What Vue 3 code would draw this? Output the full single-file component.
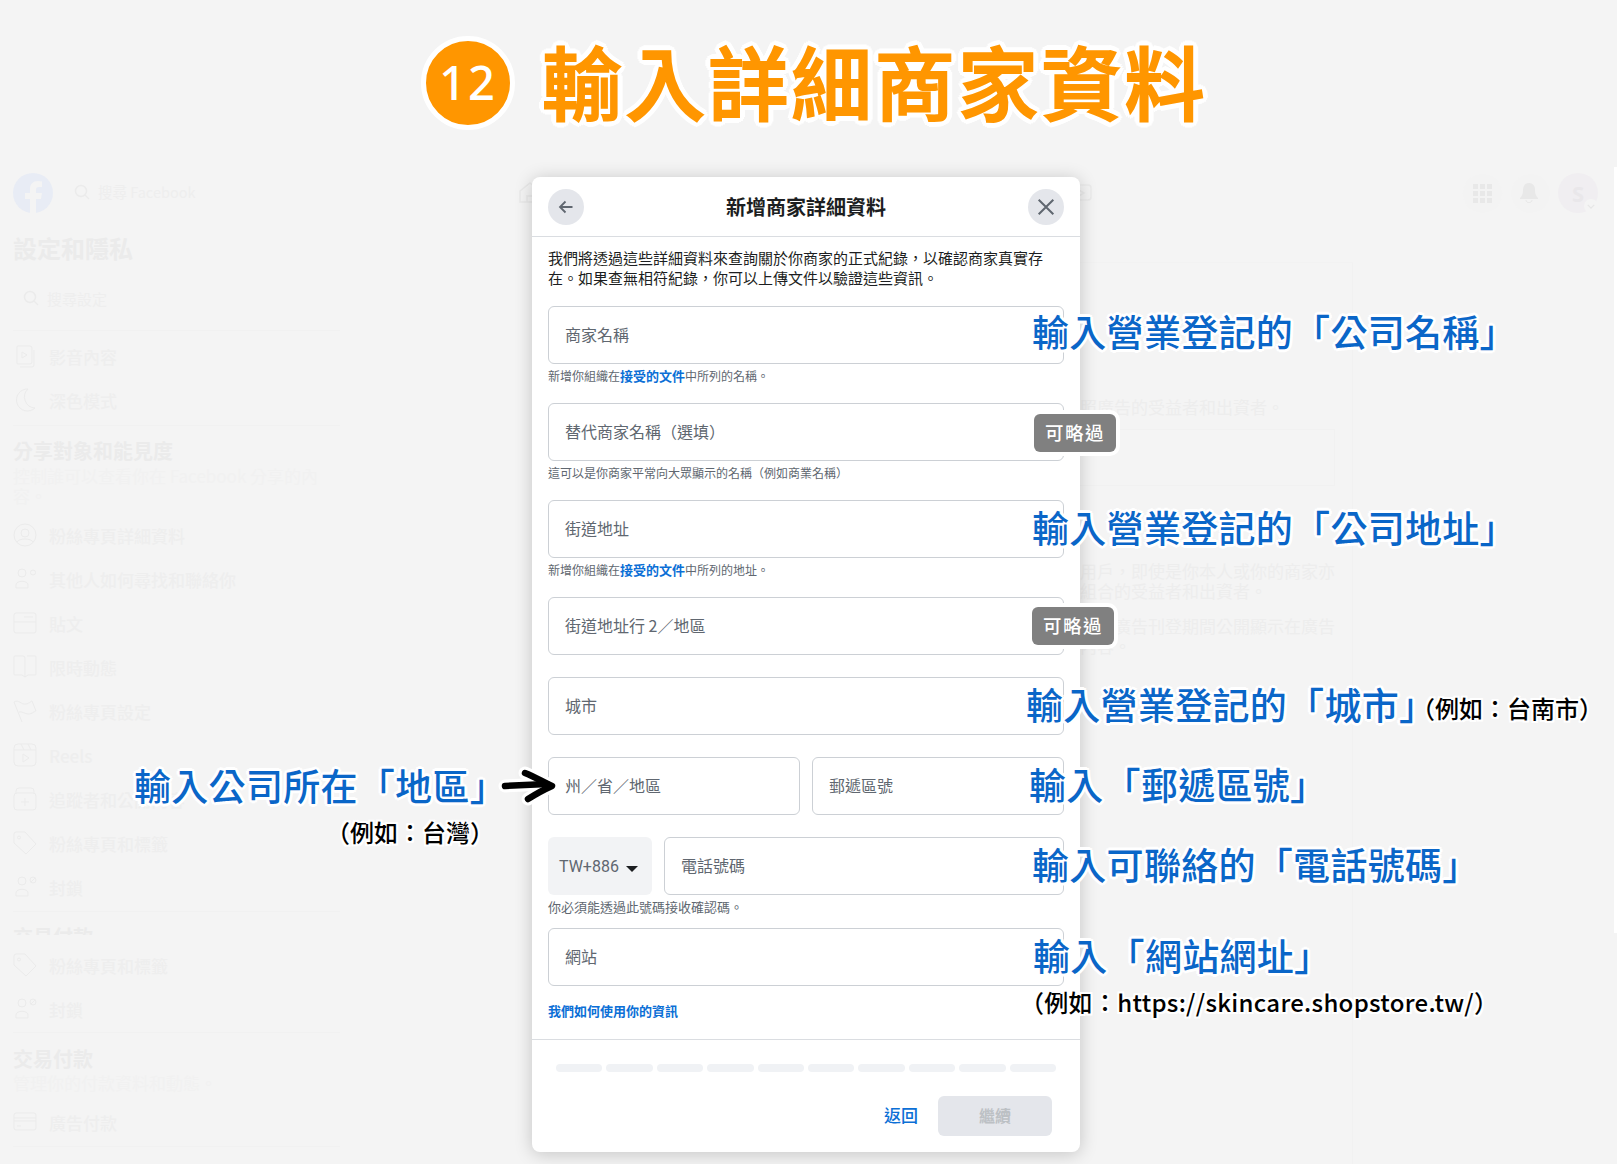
<template>
  <div class="canvas">
    <!-- faded facebook settings page behind the dialog -->
    <div class="backdrop">
      <div class="strip"></div>
      <div class="topbar">
        <svg class="fb" viewBox="0 0 40 40">
          <circle cx="20" cy="20" r="20" fill="#e8ecf5" />
          <path d="M17 40V26h-5v-6h5v-4c0-5 3-8 8-8l4 .4V14h-3c-2.400 0-3 1.300-3 3v3h6l-1 6h-5v14z" fill="#f4f4f4" />
        </svg>
        <svg class="ico-search" viewBox="0 0 16 16"><circle cx="7" cy="7" r="5.500" /><path d="M11 11l4 4" /></svg>
        <span class="bar-search">搜尋 Facebook</span>
        <svg class="bar-home" viewBox="0 0 22 22"><path d="M1 20V9l10-8 10 8v11z" /><path d="M8 20v-6h6v6" /></svg>
        <svg class="bar-tv" viewBox="0 0 22 18"><rect x="1" y="1" width="20" height="15" rx="3" /><path d="M9 6l5 3-5 3z" /></svg>
        <div class="bar-btn first">
          <span v-for="n in 9" :key="n" class="cell"></span>
        </div>
        <div class="bar-btn">
          <svg class="bell" viewBox="0 0 18 20"><path d="M9 0c4 0 6 3 6 7 0 4 1 6 3 8v1H0v-1c2-2 3-4 3-8 0-4 2-7 6-7z" /><path d="M6 17c0 3.500 6 3.500 6 0" class="bell-clap" /></svg>
        </div>
        <div class="avatar">
          S
          <span class="avatar-chev"><svg viewBox="0 0 10 6"><path d="M1 1l4 4 4-4" /></svg></span>
        </div>
      </div>

      <aside class="sidebar">
        <h2 class="side-title">設定和隱私</h2>
        <div class="side-search">
          <svg class="ico-search" viewBox="0 0 16 16"><circle cx="7" cy="7" r="5.500" /><path d="M11 11l4 4" /></svg>
          <span>搜尋設定</span>
        </div>
        <hr class="side-line" />
        <ul class="rows first-rows">
          <li v-for="row in groupA" :key="row.text">
            <svg viewBox="0 0 24 24"><path :d="icons[row.icon]" /></svg>{{ row.text }}
          </li>
        </ul>
        <hr class="side-line after-first" />
        <h3 class="side-head">分享對象和能見度</h3>
        <p class="side-sub">控制誰可以查看你在 Facebook 分享的內<br />容。</p>
        <ul class="rows">
          <li v-for="row in groupB" :key="row.text">
            <svg viewBox="0 0 24 24"><path :d="icons[row.icon]" /></svg>{{ row.text }}
          </li>
        </ul>
        <hr class="side-line after-b" />
        <div class="clip-head"><h3 class="side-head">交易付款</h3></div>
        <ul class="rows rows-c">
          <li v-for="row in groupC" :key="row.text">
            <svg viewBox="0 0 24 24"><path :d="icons[row.icon]" /></svg>{{ row.text }}
          </li>
        </ul>
        <hr class="side-line after-c" />
        <h3 class="side-head second">交易付款</h3>
        <p class="side-sub tight">管理你的付款資料和動態。</p>
        <ul class="rows">
          <li>
            <svg viewBox="0 0 24 24"><path :d="icons.card" /></svg>廣告付款
          </li>
        </ul>
        <hr class="side-line last" />
      </aside>

      <section class="panel">
        <p class="panel-text">照廣告的受益者和出資者。</p>
        <div class="panel-box"></div>
        <p class="panel-text gap-a">用戶，即使是你本人或你的商家亦<br />組合的受益者和出資者。</p>
        <p class="panel-text gap-b">會在廣告刊登期間公開顯示在廣告<br />內容。</p>
      </section>
    </div>

    <header class="heading">
      <span class="step">12</span>
      <h1 class="heading-text">輸入詳細商家資料</h1>
    </header>

    <main class="modal">
      <div class="modal-head">
        <button class="round">
          <svg viewBox="0 0 16 16" width="16" height="16"><path d="M14.500 8H2M7.500 2.500L2 8l5.500 5.500" /></svg>
        </button>
        <h2 class="modal-title">新增商家詳細資料</h2>
        <button class="round">
          <svg viewBox="0 0 16 16" width="18" height="18"><path d="M1.500 1.500l13 13M14.500 1.500l-13 13" /></svg>
        </button>
      </div>

      <div class="modal-body">
        <p class="intro">我們將透過這些詳細資料來查詢關於你商家的正式紀錄，以確認商家真實存在。如果查無相符紀錄，你可以上傳文件以驗證這些資訊。</p>

        <div class="field has-help">
          <div class="input">商家名稱</div>
          <p class="help">新增你組織在<a>接受的文件</a>中所列的名稱。</p>
        </div>
        <div class="field has-help">
          <div class="input">替代商家名稱（選填）</div>
          <p class="help">這可以是你商家平常向大眾顯示的名稱（例如商業名稱）</p>
        </div>
        <div class="field has-help">
          <div class="input">街道地址</div>
          <p class="help">新增你組織在<a>接受的文件</a>中所列的地址。</p>
        </div>
        <div class="field">
          <div class="input">街道地址行 2／地區</div>
        </div>
        <div class="field">
          <div class="input">城市</div>
        </div>
        <div class="field split">
          <div class="input">州／省／地區</div>
          <div class="input">郵遞區號</div>
        </div>
        <div class="field phone">
          <div class="phone-row">
            <div class="select">TW+886<span class="caret"></span></div>
            <div class="input">電話號碼</div>
          </div>
          <p class="help big">你必須能透過此號碼接收確認碼。</p>
        </div>
        <div class="field site">
          <div class="input">網站</div>
        </div>
        <a class="how">我們如何使用你的資訊</a>
      </div>

      <div class="modal-foot">
        <div class="progress">
          <span v-for="n in 10" :key="n"></span>
        </div>
        <div class="actions">
          <a class="back">返回</a>
          <button class="next">繼續</button>
        </div>
      </div>
    </main>

    <!-- annotations laid over the dialog -->
    <div class="note n-name">輸入營業登記的「公司名稱」</div>
    <div class="skip s-one">可略過</div>
    <div class="note n-addr">輸入營業登記的「公司地址」</div>
    <div class="skip s-two">可略過</div>
    <div class="note n-city">輸入營業登記的「城市」</div>
    <div class="hint h-city">（例如：台南市）</div>
    <div class="note n-zip">輸入「郵遞區號」</div>
    <div class="note n-phone">輸入可聯絡的「電話號碼」</div>
    <div class="note n-site">輸入「網站網址」</div>
    <div class="hint h-site">（例如：https://skincare.shopstore.tw/）</div>
    <div class="note n-area">輸入公司所在「地區」</div>
    <div class="hint h-area">（例如：台灣）</div>
    <svg class="arrow" viewBox="0 0 70 44">
      <g class="arrow-halo">
        <path d="M10 22L52 20" />
        <path d="M30 9C40 13 48 18 57 22C48 26 41 30 33 35" />
      </g>
      <g class="arrow-ink">
        <path d="M10 22L52 20" />
        <path d="M30 9C40 13 48 18 57 22C48 26 41 30 33 35" />
      </g>
    </svg>
  </div>
</template>

<script setup>
const icons = {
  video: 'M5 2h12a2 2 0 0 1 2 2v14a2 2 0 0 1-2 2H5a1 1 0 0 1-1-1V3a1 1 0 0 1 1-1zM9 8l5 3-5 3zM21 6v15a2 2 0 0 1-2 2H7',
  moon: 'M15 1a11 11 0 1 0 7 19A11 11 0 0 1 15 1z',
  user: 'M12 1a11 11 0 1 0 0 22 11 11 0 0 0 0-22zM12 6a4 4 0 1 0 0 8 4 4 0 0 0 0-8zM4 19c2-4 14-4 16 0',
  people: 'M9 2a4 4 0 1 0 0 8 4 4 0 0 0 0-8zM3 21v-3c0-5 12-5 12 0v3zM20 3a2.500 2.500 0 1 0 0 5 2.500 2.500 0 0 0 0-5z',
  post: 'M3 2h18a2 2 0 0 1 2 2v16a2 2 0 0 1-2 2H3a2 2 0 0 1-2-2V4a2 2 0 0 1 2-2zM1 11h22M6 6h0M11 6h9',
  story: 'M2 1h8a2 2 0 0 1 2 2v19l-3-2H2a1 1 0 0 1-1-1V2a1 1 0 0 1 1-1zM14 1h8a1 1 0 0 1 1 1v17a1 1 0 0 1-1 1h-7l-3 2',
  flag: 'M9 23L1 3c5-3 7 3 12 2 4-1 5-3 6-3l4 10c-2 0-3 3-8 3-3 0-6-3-9-2',
  reels: 'M5 1h14a4 4 0 0 1 4 4v14a4 4 0 0 1-4 4H5a4 4 0 0 1-4-4V5a4 4 0 0 1 4-4zM1 7h22M8 1l3 6M15 1l3 6M10 11l6 4-6 4z',
  plus: 'M4 6h16a3 3 0 0 1 3 3v11a3 3 0 0 1-3 3H4a3 3 0 0 1-3-3V9a3 3 0 0 1 3-3zM3 6V4a3 3 0 0 1 3-3h12a3 3 0 0 1 3 3v2M12 11v8M8 15h8',
  tag: 'M3 1h9l11 12-10 10L1 12V3a2 2 0 0 1 2-2zM6 5a1.500 1.500 0 1 0 0 3 1.500 1.500 0 0 0 0-3z',
  block: 'M9 2a4 4 0 1 0 0 8 4 4 0 0 0 0-8zM3 21v-3c0-5 12-5 12 0v3zM20 2a3 3 0 1 0 0 6 3 3 0 0 0 0-6zM18 7l4-4',
  card: 'M3 3h18a2 2 0 0 1 2 2v13a2 2 0 0 1-2 2H3a2 2 0 0 1-2-2V5a2 2 0 0 1 2-2zM1 8h22M1 11h22M4 16h4',
}

const groupA = [
  { icon: 'video', text: '影音內容' },
  { icon: 'moon', text: '深色模式' },
]

const groupB = [
  { icon: 'user', text: '粉絲專頁詳細資料' },
  { icon: 'people', text: '其他人如何尋找和聯絡你' },
  { icon: 'post', text: '貼文' },
  { icon: 'story', text: '限時動態' },
  { icon: 'flag', text: '粉絲專頁設定' },
  { icon: 'reels', text: 'Reels' },
  { icon: 'plus', text: '追蹤者和公開內容' },
  { icon: 'tag', text: '粉絲專頁和標籤' },
  { icon: 'block', text: '封鎖' },
]

const groupC = [
  { icon: 'tag', text: '粉絲專頁和標籤' },
  { icon: 'block', text: '封鎖' },
]
</script>

<style scoped>
.canvas {
  position: relative;
  width: 1617px;
  height: 1164px;
  overflow: hidden;
  background: #f4f4f4;
  font-family: "Noto Sans CJK TC", "Noto Sans", sans-serif;
}

/* backdrop */
.backdrop {
  position: absolute;
  inset: 0;
  padding-top: 173px;
  color: #ececec;
}

.strip {
  position: absolute;
  top: 167px;
  right: 0;
  width: 3px;
  height: 766px;
  background: #fff;
}

.topbar {
  display: flex;
  align-items: center;
  height: 40px;
  padding-left: 13px;
}

.fb {
  width: 40px;
  height: 40px;
}

.ico-search {
  width: 16px;
  height: 16px;
  flex: none;
  fill: none;
  stroke: #ebebeb;
  stroke-width: 1.500;
}

.topbar .ico-search {
  margin: 0 0 2px 21px;
}

.bar-search {
  width: 421px;
  margin: 0 0 3px 8px;
  font-size: 14.500px;
  color: #eeeeee;
}

.bar-home {
  width: 22px;
  height: 22px;
  fill: none;
  stroke: #e9e9e9;
  stroke-width: 1.500;
}

.bar-tv {
  width: 22px;
  height: 18px;
  margin-left: 529px;
  fill: none;
  stroke: #ebebeb;
  stroke-width: 1.500;
}

.bar-btn {
  display: grid;
  grid-template-columns: repeat(3, 5px);
  gap: 2px;
  place-content: center;
  width: 39px;
  height: 39px;
  margin-left: 9px;
  border-radius: 50%;
  background: #f3f3f3;
}

.bar-btn.first {
  margin-left: 371px;
}

.cell {
  width: 5px;
  height: 5px;
  background: #e8e8e8;
}

.bell {
  width: 18px;
  height: 20px;
  grid-column: 1 / 4;
  margin-left: -1px;
  fill: #e8e8e8;
}

.bell-clap {
  fill: none;
  stroke: #e8e8e8;
}

.avatar {
  position: relative;
  width: 40px;
  height: 40px;
  margin-left: 8px;
  border-radius: 50%;
  background: #f0eef1;
  color: #e9e7ea;
  font: 700 22px/40px "Noto Sans", sans-serif;
  text-align: center;
}

.avatar-chev {
  position: absolute;
  right: 0;
  bottom: 0;
  display: flex;
  align-items: center;
  justify-content: center;
  width: 14px;
  height: 14px;
  border-radius: 50%;
  background: #f4f4f4;
}

.avatar-chev svg {
  width: 8px;
  height: 5px;
  fill: none;
  stroke: #e6e6e6;
  stroke-width: 1.500;
}

.sidebar {
  width: 327px;
  margin-left: 13px;
}

.side-title {
  margin: 19px 0 0;
  font-size: 24px;
  line-height: 32px;
  font-weight: 700;
  color: #ebebeb;
}

.side-search {
  display: flex;
  align-items: center;
  gap: 8px;
  height: 20px;
  margin: 24px 0 22px 10px;
  font-size: 15px;
  color: #eeeeee;
}

.side-line {
  height: 1px;
  margin: 0;
  border: 0;
  background: #f1f1f1;
}

.side-line.after-first {
  margin-top: 3px;
}

.side-line.after-b {
  margin-top: 2px;
}

.side-line.after-c {
  margin-top: 1px;
}

.side-line.last {
  margin-top: 2px;
}

.rows {
  margin: 7px 0 0;
  padding: 0;
  list-style: none;
}

.rows.first-rows {
  margin-top: 3px;
}

.rows.rows-c {
  margin-top: 8px;
}

.rows li {
  display: flex;
  align-items: center;
  gap: 12px;
  height: 44px;
  font-size: 17px;
  font-weight: 500;
  color: #eeeeee;
}

.rows svg {
  width: 24px;
  height: 24px;
  flex: none;
  fill: none;
  stroke: #ebebeb;
  stroke-width: 1;
}

.side-head {
  margin: 12px 0 0;
  font-size: 20px;
  line-height: 26px;
  font-weight: 700;
  color: #ebebeb;
}

.side-head.second {
  margin-top: 13px;
}

.clip-head {
  height: 23px;
  overflow: hidden;
}

.clip-head .side-head {
  margin-top: 12px;
}

.side-sub {
  margin: 2px 0 0;
  font-size: 17px;
  line-height: 20px;
  color: #f1f1f1;
}

.side-sub.tight {
  margin-top: 1px;
}

.panel {
  position: absolute;
  top: 262px;
  left: 1080px;
  bottom: 0;
  width: 273px;
  padding-top: 134px;
  border-top: 1px solid #f2f2f2;
  border-right: 1px solid #f1f1f1;
  box-sizing: border-box;
}

.panel-text {
  margin: 0;
  font-size: 17px;
  line-height: 20px;
  color: #ededed;
  white-space: nowrap;
}

.panel-box {
  width: 255px;
  height: 57px;
  margin-top: 12px;
  border: solid #f1f1f1;
  border-width: 1px 1px 1px 0;
  box-sizing: border-box;
}

.gap-a {
  margin-top: 75px;
}

.gap-b {
  margin-top: 15px;
}

/* big step heading */
.heading {
  position: relative;
  display: flex;
  align-items: center;
  height: 177px;
  padding: 0 0 12px 421px;
  box-sizing: border-box;
}

.step {
  display: flex;
  align-items: center;
  justify-content: center;
  width: 84px;
  height: 84px;
  border: 5px solid #fff;
  border-radius: 50%;
  background: #ff9600;
  color: #fff;
  font: 500 47px/1 "Noto Sans", sans-serif;
  letter-spacing: 2px;
}

.heading-text {
  margin: 0 0 8px 27px;
  font-size: 80px;
  line-height: 1.1;
  font-weight: 500;
  letter-spacing: 3.200px;
  color: #ff9600;
  -webkit-text-stroke: 2px #ff9600;
  text-shadow:
    6px 0 0 #fff, -6px 0 0 #fff, 0 6px 0 #fff, 0 -6px 0 #fff,
    4px 4px 0 #fff, -4px 4px 0 #fff, 4px -4px 0 #fff, -4px -4px 0 #fff,
    5px 2px 0 #fff, -5px 2px 0 #fff, 5px -2px 0 #fff, -5px -2px 0 #fff,
    2px 5px 0 #fff, -2px 5px 0 #fff, 2px -5px 0 #fff, -2px -5px 0 #fff;
}

/* dialog */
.modal {
  position: relative;
  width: 548px;
  height: 975px;
  margin-left: 532px;
  border-radius: 8px;
  background: #fff;
  box-shadow: 0 2px 18px rgba(0, 0, 0, 0.2);
  color: #1c1e21;
}

.modal-head {
  display: flex;
  align-items: center;
  justify-content: space-between;
  height: 59px;
  padding: 0 16px;
  border-bottom: 1px solid #dadde1;
}

.round {
  display: flex;
  align-items: center;
  justify-content: center;
  width: 36px;
  height: 36px;
  padding: 0;
  border: 0;
  border-radius: 50%;
  background: #e4e6eb;
}

.round svg {
  fill: none;
  stroke: #606770;
  stroke-width: 1.800;
}

.modal-title {
  margin: 0;
  font-size: 20px;
  line-height: 24px;
  font-weight: 700;
}

.modal-body {
  padding: 11px 16px 0;
}

.intro {
  margin: 0 0 18px;
  font-size: 15px;
  line-height: 20px;
}

.field {
  margin-bottom: 22px;
}

.field.has-help {
  margin-bottom: 19px;
}

.field.phone {
  margin-bottom: 13px;
}

.field.site {
  margin-bottom: 17px;
}

.input {
  display: flex;
  align-items: center;
  height: 58px;
  padding: 0 16px 2px;
  border: 1px solid #ccd0d5;
  border-radius: 6px;
  box-sizing: border-box;
  font-size: 16px;
  color: #606770;
}

.help {
  margin: 4px 0 0;
  font-size: 12px;
  line-height: 16px;
  color: #606770;
}

.help.big {
  font-size: 13px;
}

.help a {
  font-size: 13px;
  font-weight: 700;
  color: #0b6fd6;
}

.how {
  display: block;
  font-size: 13px;
  line-height: 16px;
  font-weight: 700;
  color: #0b6fd6;
}

.split {
  display: flex;
  gap: 12px;
}

.split .input {
  flex: 1;
}

.phone-row {
  display: flex;
  gap: 12px;
}

.phone-row .input {
  flex: 1;
}

.select {
  display: flex;
  align-items: center;
  justify-content: space-between;
  width: 104px;
  height: 58px;
  padding: 0 14px 0 11px;
  border-radius: 6px;
  box-sizing: border-box;
  background: #f2f3f5;
  color: #606770;
  font-family: Roboto, sans-serif;
  font-size: 16px;
}

.caret {
  margin-top: 5px;
  border-top: 6px solid #1c1e21;
  border-left: 6px solid transparent;
  border-right: 6px solid transparent;
}

.modal-foot {
  margin-top: 20px;
  padding: 24px 24px 16px;
  border-top: 1px solid #dadde1;
}

.progress {
  display: flex;
  gap: 4px;
}

.progress span {
  flex: 1;
  height: 8px;
  border-radius: 4px;
  background: #f0f2f5;
}

.actions {
  display: flex;
  align-items: center;
  justify-content: flex-end;
  gap: 20px;
  margin: 24px 4px 0 0;
}

.back {
  margin-bottom: 3px;
  font-size: 17px;
  font-weight: 500;
  color: #0b6fd6;
}

.next {
  width: 114px;
  height: 40px;
  padding: 0 0 2px;
  border: 0;
  border-radius: 6px;
  background: #e4e6eb;
  color: #bcc0c4;
  font-family: inherit;
  font-size: 16px;
  font-weight: 700;
}

/* annotations */
.note {
  position: absolute;
  font-size: 37px;
  line-height: 44px;
  font-weight: 500;
  letter-spacing: 0.300px;
  color: #0a66c8;
  white-space: nowrap;
  text-shadow:
    3px 0 0 #fff, -3px 0 0 #fff, 0 3px 0 #fff, 0 -3px 0 #fff,
    2px 2px 0 #fff, -2px 2px 0 #fff, 2px -2px 0 #fff, -2px -2px 0 #fff;
}

.n-name { left: 1032px; top: 309px; }
.n-addr { left: 1032px; top: 505px; }
.n-city { left: 1026px; top: 682px; }
.n-zip { left: 1029px; top: 762px; }
.n-phone { left: 1032px; top: 842px; }
.n-site { left: 1033px; top: 933px; }
.n-area { left: 134px; top: 763px; }

.hint {
  position: absolute;
  font-size: 24px;
  line-height: 32px;
  font-weight: 500;
  color: #000;
  white-space: nowrap;
  text-shadow:
    2px 0 0 #fff, -2px 0 0 #fff, 0 2px 0 #fff, 0 -2px 0 #fff,
    2px 2px 0 #fff, -2px 2px 0 #fff, 2px -2px 0 #fff, -2px -2px 0 #fff;
}

.h-city { left: 1411px; top: 692px; }
.h-site { left: 1020px; top: 986px; letter-spacing: 0.300px; }
.h-area { left: 326px; top: 816px; }

.skip {
  position: absolute;
  width: 82px;
  height: 38px;
  border-radius: 6px;
  background: #808080;
  box-shadow: 0 0 0 4px #fff;
  color: #fff;
  font-size: 18.500px;
  font-weight: 500;
  line-height: 36px;
  letter-spacing: 1.500px;
  text-align: center;
}

.s-one { left: 1034px; top: 414px; }
.s-two { left: 1032px; top: 607px; }

.arrow {
  position: absolute;
  left: 495px;
  top: 764px;
  width: 70px;
  height: 44px;
  fill: none;
  stroke-linecap: round;
  stroke-linejoin: round;
}

.arrow-halo {
  stroke: #fff;
  stroke-width: 13;
}

.arrow-ink {
  stroke: #000;
  stroke-width: 6.500;
}
</style>

<style>
body {
  background: #f4f4f4;
}
</style>
